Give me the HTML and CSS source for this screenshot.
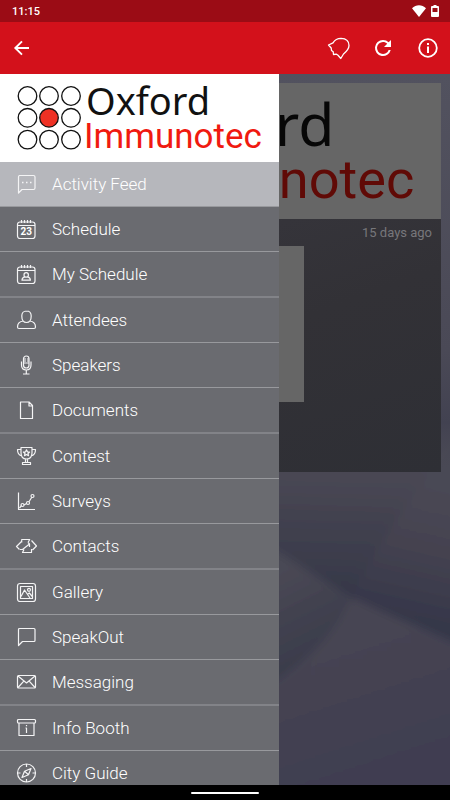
FILE: index.html
```html
<!DOCTYPE html>
<html lang="en">
<head>
<meta charset="utf-8">
<meta name="viewport" content="width=device-width, initial-scale=1">
<title>Oxford Immunotec</title>
<link rel="stylesheet" href="styles.css">
</head>
<body>
<svg class="defs" aria-hidden="true">
  <symbol id="logo" viewBox="0 0 279 88">
    <rect width="279" height="88" class="logo-bg"/>
    <g class="logo-dots">
      <circle cx="27.500" cy="22" r="9.300"/><circle cx="49" cy="22" r="9.300"/><circle cx="71" cy="22" r="9.300"/>
      <circle cx="27.500" cy="43.800" r="9.300"/><circle cx="49" cy="43.800" r="9.300" class="logo-center"/><circle cx="71" cy="43.800" r="9.300"/>
      <circle cx="27.500" cy="65.600" r="9.300"/><circle cx="49" cy="65.600" r="9.300"/><circle cx="71" cy="65.600" r="9.300"/>
    </g>
    <text x="86" y="41" class="logo-top">Oxford</text>
    <text x="84" y="74" class="logo-bottom">Immunotec</text>
  </symbol>
</svg>

<div class="status">
  <span>11:15</span>
  <span class="status-icons">
    <svg width="14" height="12" viewBox="0 0 14 12" aria-hidden="true"><path d="M7 12 0 3.200C4-.9 10-.9 14 3.200Z" fill="#fff"/></svg>
    <svg width="8" height="12" viewBox="0 0 8 12" aria-hidden="true"><path fill="#fff" fill-rule="evenodd" d="M2.500 0h3v1H7a1 1 0 0 1 1 1v9a1 1 0 0 1-1 1H1a1 1 0 0 1-1-1V2a1 1 0 0 1 1-1h1.500ZM1.500 3v4h5V3Z"/></svg>
  </span>
</div>

<header class="appbar">
  <button type="button" aria-label="Back">
    <svg width="24" height="24" viewBox="0 0 24 24"><path d="M19 12H6M12 5.300 5.300 12l6.700 6.700" fill="none" stroke="#fff" stroke-width="1.900"/></svg>
  </button>
  <div class="actions">
    <button type="button" aria-label="Notifications">
      <svg width="24" height="24" viewBox="0 0 24 24"><path d="M2.500 9 7 6.800C8.800 3.800 11.500 2.300 15 2.300c5 .2 8 3 8 7.200 0 4-2.700 6.200-5.500 8.500L14.800 22.500 12 19.300 10.500 18.200 7.500 18.500 7.200 15.800 5.500 14.500 5.200 12Z" fill="none" stroke="#fff" stroke-width="1.300" stroke-linejoin="round"/></svg>
    </button>
    <button type="button" aria-label="Refresh">
      <svg width="24" height="24" viewBox="0 0 24 24"><path fill="#fff" d="M17.650 6.350A7.960 7.960 0 0 0 12 4a8 8 0 1 0 7.730 10h-2.080A6 6 0 1 1 12 6c1.660 0 3.140.690 4.220 1.780L13 11h7V4z"/></svg>
    </button>
    <button type="button" aria-label="Information">
      <svg width="24" height="24" viewBox="0 0 24 24"><circle cx="12" cy="12" r="8.800" fill="none" stroke="#fff" stroke-width="1.800"/><path d="M11 7h2v2h-2zM11 10.500h2V17h-2z" fill="#fff"/></svg>
    </button>
  </div>
</header>

<main class="stage">
  <svg class="backdrop" viewBox="0 0 450 711" preserveAspectRatio="none" aria-hidden="true">
    <defs>
      <linearGradient id="gt" gradientUnits="userSpaceOnUse" x1="350" y1="390" x2="347" y2="520"><stop offset="0" stop-color="#4a4854"/><stop offset=".3" stop-color="#454451"/><stop offset="1" stop-color="#363849"/></linearGradient>
      <linearGradient id="gr" gradientUnits="userSpaceOnUse" x1="430" y1="410" x2="400" y2="540"><stop offset="0" stop-color="#4a4854"/><stop offset=".5" stop-color="#444250"/><stop offset="1" stop-color="#36374a"/></linearGradient>
      <linearGradient id="gl" gradientUnits="userSpaceOnUse" x1="290" y1="490" x2="330" y2="570"><stop offset="0" stop-color="#4a4854"/><stop offset="1" stop-color="#3b3d4c"/></linearGradient>
      <linearGradient id="gb" gradientUnits="userSpaceOnUse" x1="350" y1="525" x2="410" y2="711"><stop offset="0" stop-color="#484652"/><stop offset="1" stop-color="#3f3d51"/></linearGradient>
      <linearGradient id="gs" x1="0" y1="0" x2="0" y2="1"><stop offset="0" stop-color="#52525f"/><stop offset=".7" stop-color="#4a4956"/><stop offset=".88" stop-color="#424251"/><stop offset="1" stop-color="#494753" stop-opacity="0"/></linearGradient>
      <filter id="soft"><feGaussianBlur stdDeviation="4"/></filter>
    </defs>
    <rect width="450" height="711" fill="#484653"/>
    <g filter="url(#soft)">
      <path d="M-20-20H470V340L438 390 352 524 279 479-20 290Z" fill="url(#gt)"/>
      <path d="M438 390 470 340V576L450 567 352 524Q375 470 438 390Z" fill="url(#gr)"/>
      <path d="M-20 290 279 479 352 524Q330 570 279 606L-20 780Z" fill="url(#gl)"/>
      <path d="M352 524 450 567 470 576V740H-20V780L279 606Q330 570 352 524Z" fill="url(#gb)"/>
    </g>
    <rect width="450" height="396" fill="url(#gs)"/>
  </svg>

  <article class="card">
    <svg class="logo dimmed" viewBox="0 0 279 88" role="img" aria-label="Oxford Immunotec"><use href="#logo"/></svg>
    <div class="post">
      <time>15 days ago</time>
      <div class="photo"></div>
    </div>
  </article>

  <nav class="drawer" aria-label="Main menu">
    <svg class="logo" viewBox="0 0 279 88" role="img" aria-label="Oxford Immunotec"><use href="#logo"/></svg>
    <ul>
      <li class="selected"><a href="#feed"><svg viewBox="0 0 22 22"><path d="M4.500 2.500h14a1.500 1.500 0 0 1 1.500 1.500v11a1.500 1.500 0 0 1-1.500 1.500H7L3.500 20V4a1.500 1.500 0 0 1 1-1.500Z"/><path d="M7 9.500h1.500M11 9.500h1.500M15 9.500h1.500" stroke-width="1.500"/></svg>Activity Feed</a></li>
      <li><a href="#schedule"><svg viewBox="0 0 22 22"><rect x="2.500" y="4" width="17.500" height="16.500" rx="2.500"/><path d="M3 7.500h17M6.500 2v3M9.500 2v3M12.500 2v3M15.500 2v3"/><text x="11.300" y="17.300" class="date">23</text></svg>Schedule</a></li>
      <li><a href="#my-schedule"><svg viewBox="0 0 22 22"><rect x="2.500" y="4" width="17.500" height="16.500" rx="2.500"/><path d="M3 7.500h17M6.500 2v3M9.500 2v3M12.500 2v3M15.500 2v3"/><circle cx="11.200" cy="11.900" r="2.200"/><path d="M9.800 13.800Q7 14.500 7 17.200h8.400q0-2.700-2.800-3.400"/></svg>My Schedule</a></li>
      <li><a href="#attendees"><svg viewBox="0 0 22 22"><path d="M11.500 2C8.500 2 6.800 4 6.800 7c0 4 2 6.500 4.700 6.500S16.200 11 16.200 7c0-3-1.700-5-4.700-5ZM8.300 12C4.500 12.400 2.500 14 2.500 18q0 1.500 1.500 1.500h15q1.500 0 1.500-1.500c0-4-2-5.600-5.800-6"/></svg>Attendees</a></li>
      <li><a href="#speakers"><svg viewBox="0 0 22 22"><rect x="8.500" y="2" width="5.500" height="12" rx="2.750"/><path d="M8.500 5h2.500M8.500 7h2.500M8.500 9h5.500M12 5h2M12 7h2"/><path d="M6.500 7.500v3.500c0 3.500 2 5 4.800 5s4.700-1.500 4.700-5V7.500M11.300 16v4M8 20h6.500"/></svg>Speakers</a></li>
      <li><a href="#documents"><svg viewBox="0 0 22 22"><path d="M5.500 3h8.500l3.500 3.500v13h-12ZM14 3v4h3.500"/></svg>Documents</a></li>
      <li><a href="#contest"><svg viewBox="0 0 22 22"><path d="M6 2.500h11v5c0 4-2 6.500-5.500 6.500S6 11.500 6 7.500ZM6 4.500H2.500c0 3.500 1.500 6 4.500 6.500M17 4.500h3.500c0 3.500-1.500 6-4.500 6.500M10.500 14v3M12.500 14v3M7.500 19.500v-2h8v2Z"/><path d="m11.500 4.800.9 2 2.200.2-1.600 1.500.5 2.200-2-1.200-2 1.200.5-2.200L8.400 7l2.200-.2Z"/></svg>Contest</a></li>
      <li><a href="#surveys"><svg viewBox="0 0 22 22"><path d="M3.500 2.500v17H20M4.500 18 6.500 15.700M9 15l2.500-1.500M14 11.700l2.800-4.500"/><circle cx="7.500" cy="15" r="1.500"/><circle cx="13" cy="13" r="1.500"/><circle cx="17.500" cy="6" r="1.500"/></svg>Surveys</a></li>
      <li><a href="#contacts"><svg viewBox="0 0 22 22"><path d="M4.500 14.500 1.500 11.500 6.500 6.500M6.700 7.500V4.500h8L13 7.500M16.500 5.500l5 5.500-4 4M16.500 14v3.500h-9L9 14.500M5 14.500h2.500L14.500 9l-1.500-1.500M14.500 9v3"/></svg>Contacts</a></li>
      <li><a href="#gallery"><svg viewBox="0 0 22 22"><rect x="2.500" y="2.500" width="18" height="18" rx="2.500"/><rect x="5.500" y="5.500" width="12" height="12"/><path d="M6 15.500 9.500 9l5.500 8M12.500 13.500l1.800-1.500 3 3.500"/><circle cx="14" cy="8.800" r="1.500"/></svg>Gallery</a></li>
      <li><a href="#speakout"><svg viewBox="0 0 22 22"><path d="M4.500 2.500h14.500a1 1 0 0 1 1 1v11a1 1 0 0 1-1 1H7.500L3.500 19.500v-16a1 1 0 0 1 1-1Z"/></svg>SpeakOut</a></li>
      <li><a href="#messaging"><svg viewBox="0 0 22 22"><rect x="2.500" y="4.500" width="18" height="12.500" rx="1"/><path d="m3 5 8.500 7L20 5M3 16.500l5.800-6.300M20 16.500l-5.800-6.300"/></svg>Messaging</a></li>
      <li><a href="#info-booth"><svg viewBox="0 0 22 22"><rect x="2.500" y="2.500" width="18" height="3.500" rx="1"/><path d="M4 6v12.500h15V6M10.500 11h1V16M11.500 8v1.300"/></svg>Info Booth</a></li>
      <li><a href="#city-guide"><svg viewBox="0 0 22 22"><circle cx="11.500" cy="11" r="9"/><path d="M11.500 2v3M11.500 17v3M2.500 11h3M17.500 11h3M16 6.500l-2.500 6.200L7 15.500l2.500-6.200ZM9.500 9.300l4 3.400"/></svg>City Guide</a></li>
    </ul>
  </nav>
</main>

<footer class="gesture"><span></span></footer>
</body>
</html>
```

FILE: styles.css
```css
* { box-sizing: border-box; }

body {
  display: flex;
  flex-direction: column;
  height: 100vh;
  margin: 0;
  overflow: hidden;
  background: #000;
  color: #fff;
  font-family: Roboto, "Liberation Sans", sans-serif;
}

.defs { position: absolute; width: 0; height: 0; }

.status {
  display: flex;
  flex: none;
  align-items: center;
  justify-content: space-between;
  height: 22px;
  padding: 0 11px 0 12px;
  background: #9b0c15;
  font-size: 11px;
  font-weight: 500;
}

.status-icons { display: flex; gap: 5px; }

.appbar {
  display: flex;
  flex: none;
  align-items: center;
  justify-content: space-between;
  height: 52px;
  padding: 0 10px;
  background: #d3111b;
}

.appbar button {
  display: block;
  width: 24px;
  height: 24px;
  padding: 0;
  border: 0;
  background: none;
}

.appbar svg { display: block; }

.actions { display: flex; gap: 21px; }

.stage {
  position: relative;
  flex: 1;
  min-height: 0;
  padding: 9px;
  overflow: hidden;
}

.backdrop {
  position: absolute;
  inset: 0;
  width: 100%;
  height: 100%;
}

.logo { display: block; width: 100%; height: auto; }
.logo-bg { fill: #fff; }
.logo-dots { fill: #fff; stroke: #111; stroke-width: 1.3px; }
.logo-center { fill: #ee3124; }
.logo-top { fill: #111; font: 38px "Noto Sans", sans-serif; }
.logo-bottom { fill: #f01a10; font: 35px Roboto, sans-serif; }
.dimmed { filter: brightness(0.4); }
.dimmed + .post { color: #77777b; }

.card { position: relative; }

.post {
  display: flex;
  flex-direction: column;
  gap: 5px;
  height: 253px;
  padding: 5px 9px;
  background: linear-gradient(160deg, #38373e, #323136 50%, #2e2f35);
}

.post time {
  align-self: flex-end;
  font-size: 13px;
  line-height: 17px;
}

.photo { width: 69%; height: 156px; background: #666; }

.drawer {
  position: absolute;
  inset: 0 auto 0 0;
  width: 62%;
  overflow: hidden;
  background: #6a6b70;
}

.drawer ul { margin: 0; padding: 0; list-style: none; }
.drawer li { border-bottom: 1px solid #98999d; }
.drawer li:nth-child(3n) { border-bottom: 2px solid #828388; }
.drawer .selected { background: #b6b7bc; }

.drawer a {
  display: flex;
  align-items: center;
  gap: 15px;
  height: 44px;
  padding-left: 15px;
  color: #fff;
  font-size: 17px;
  font-weight: 300;
  text-decoration: none;
}

.drawer a svg {
  width: 22px;
  height: 22px;
  fill: none;
  stroke: #f4f4f5;
  stroke-width: 1.2;
  stroke-linejoin: round;
}

.drawer .date {
  fill: #fff;
  stroke: none;
  font-size: 10px;
  font-weight: 700;
  text-anchor: middle;
}

.gesture {
  display: flex;
  flex: none;
  align-items: center;
  justify-content: center;
  height: 15px;
  background: #000;
}

.gesture span {
  width: 15%;
  height: 2px;
  border-radius: 1px;
  background: #fff;
}
```
